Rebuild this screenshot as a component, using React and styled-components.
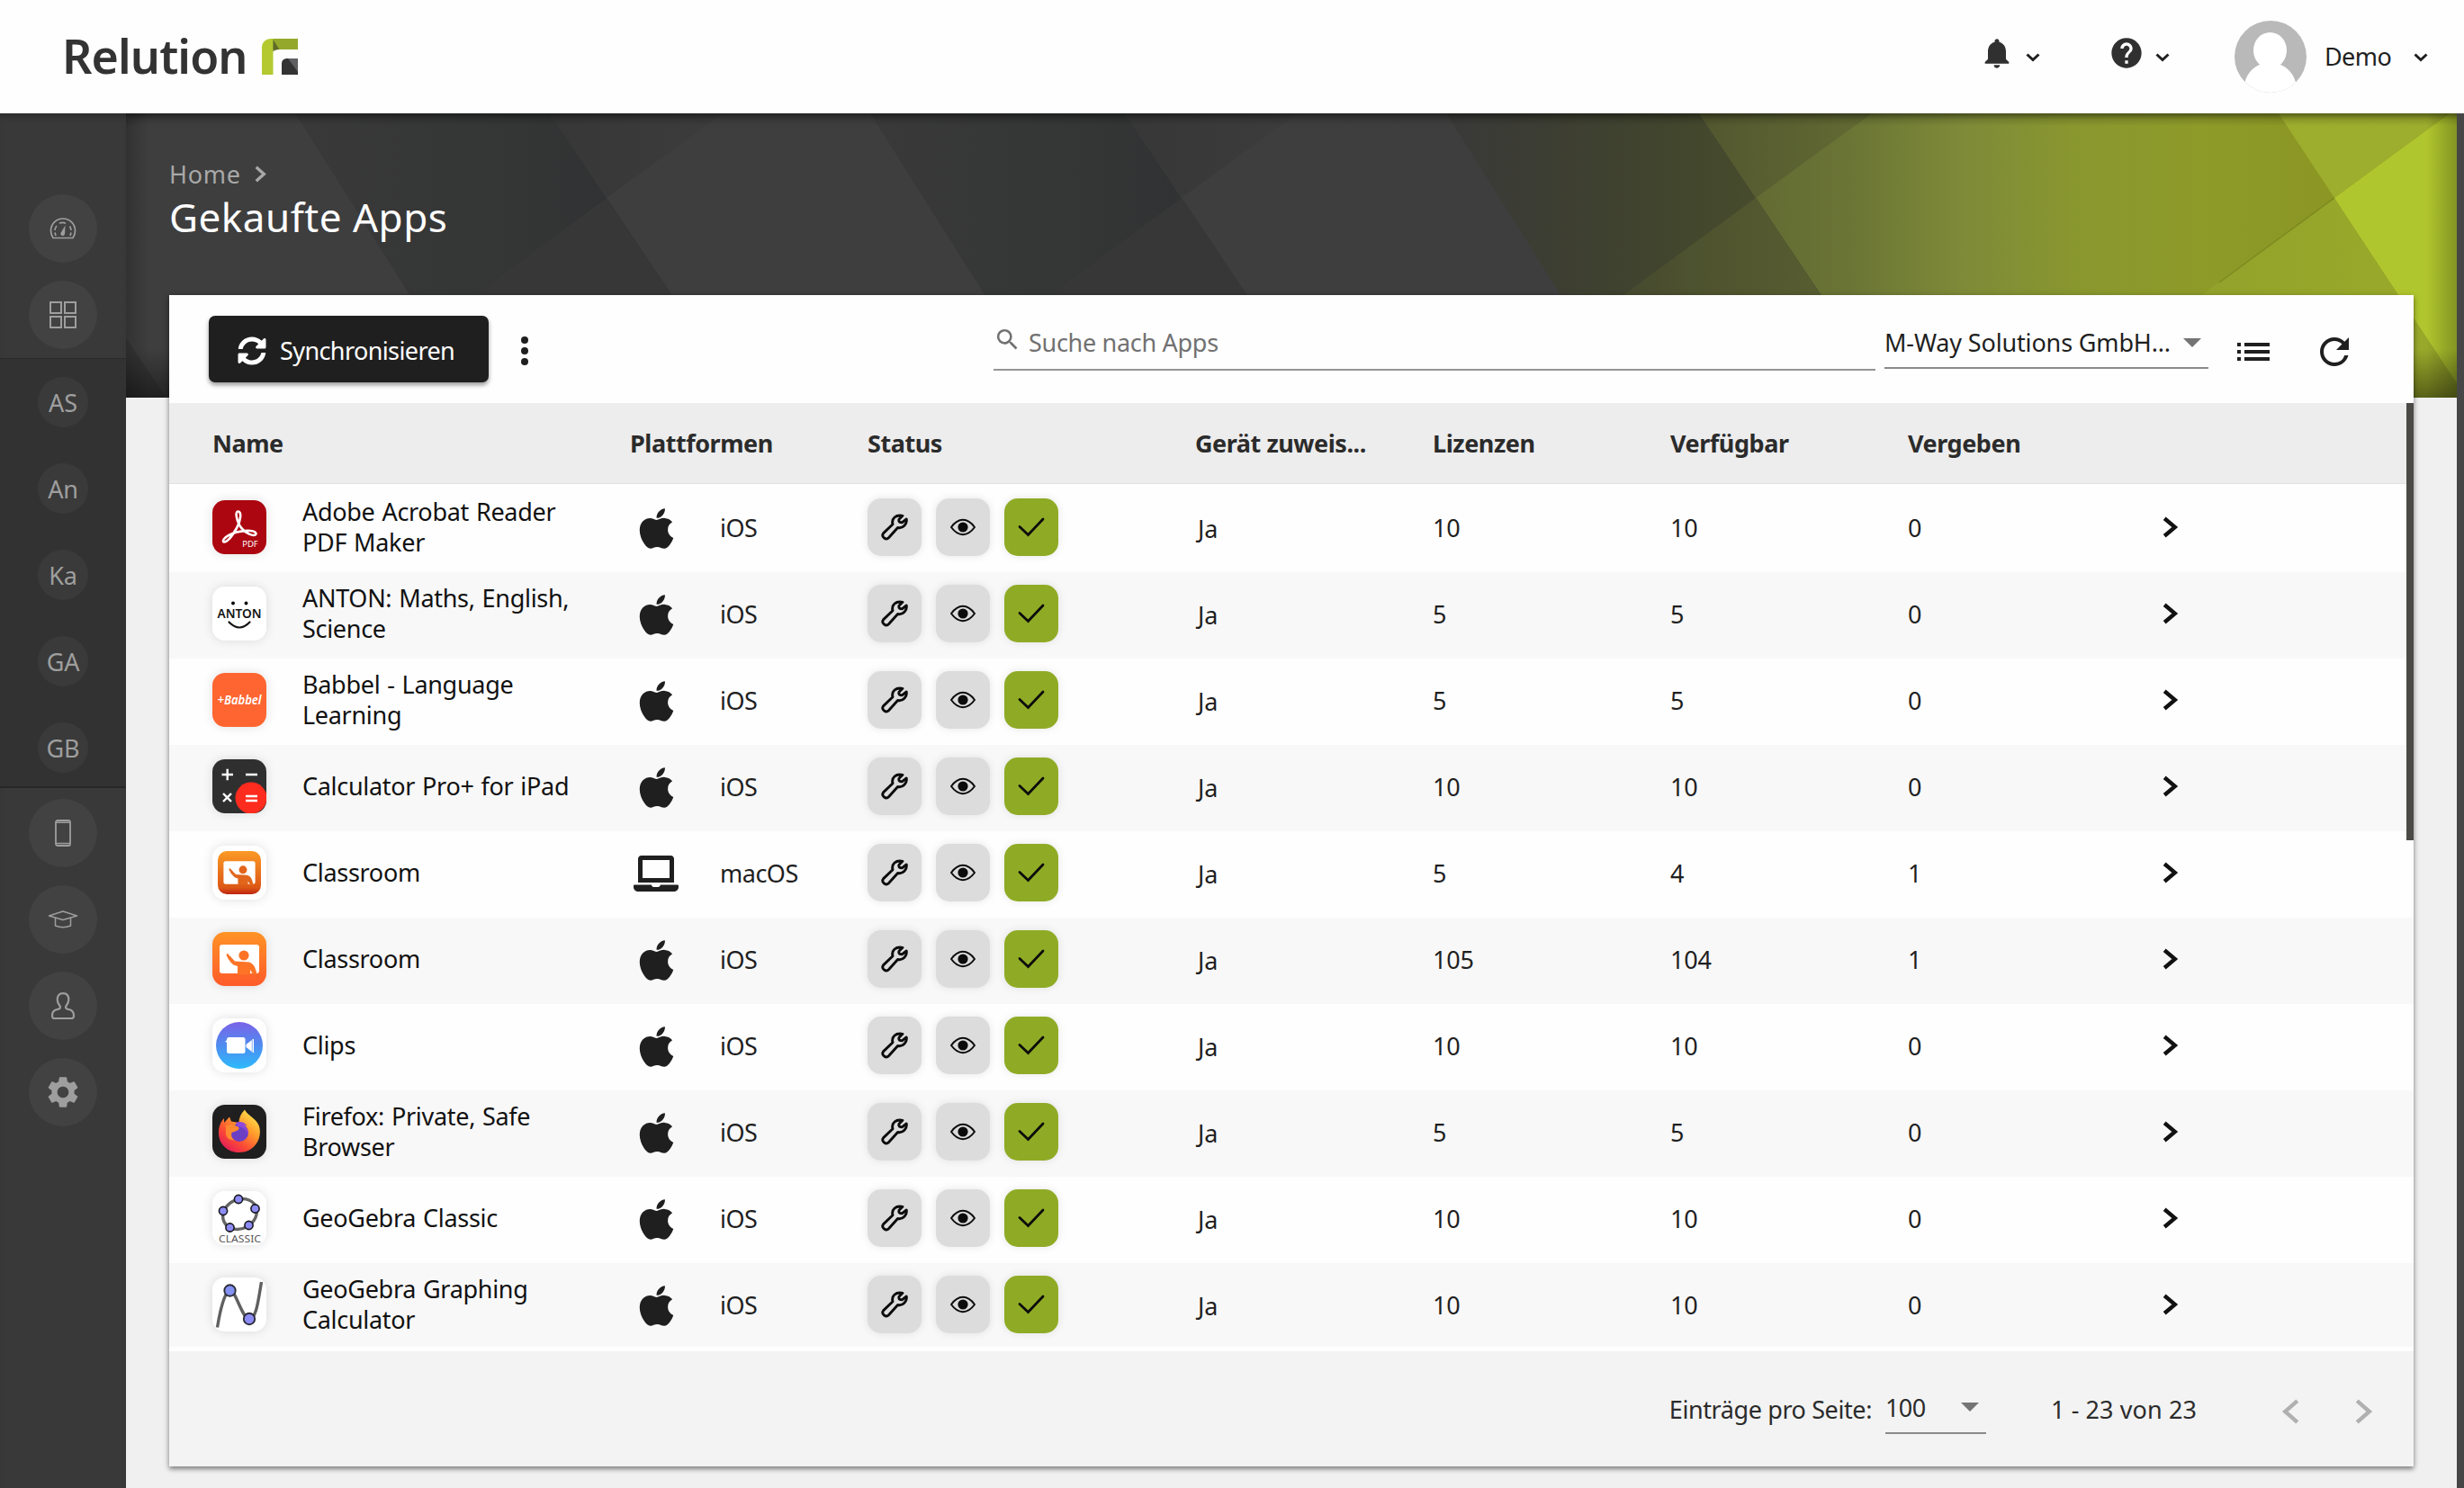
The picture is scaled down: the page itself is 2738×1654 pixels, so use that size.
import styled, { createGlobalStyle } from "styled-components";
import { FaApple, FaLaptop, FaSyncAlt } from "react-icons/fa";
import {
  MdHelp,
  MdList,
  MdNotifications,
  MdRefresh,
  MdSearch,
  MdSettings,
} from "react-icons/md";

const columns = [
  "Name",
  "Plattformen",
  "Status",
  "Gerät zuweis...",
  "Lizenzen",
  "Verfügbar",
  "Vergeben",
  "",
];

const apps = [
  { icon: AcrobatIcon, name: "Adobe Acrobat Reader PDF Maker", os: "iOS", total: 10, free: 10, used: 0 },
  { icon: AntonIcon, name: "ANTON: Maths, English, Science", os: "iOS", total: 5, free: 5, used: 0 },
  { icon: BabbelIcon, name: "Babbel - Language Learning", os: "iOS", total: 5, free: 5, used: 0 },
  { icon: CalculatorIcon, name: "Calculator Pro+ for iPad", os: "iOS", total: 10, free: 10, used: 0 },
  { icon: ClassroomMacIcon, name: "Classroom", os: "macOS", total: 5, free: 4, used: 1 },
  { icon: ClassroomIcon, name: "Classroom", os: "iOS", total: 105, free: 104, used: 1 },
  { icon: ClipsIcon, name: "Clips", os: "iOS", total: 10, free: 10, used: 0 },
  { icon: FirefoxIcon, name: "Firefox: Private, Safe Browser", os: "iOS", total: 5, free: 5, used: 0 },
  { icon: GeoClassicIcon, name: "GeoGebra Classic", os: "iOS", total: 10, free: 10, used: 0 },
  { icon: GeoGraphIcon, name: "GeoGebra Graphing Calculator", os: "iOS", total: 10, free: 10, used: 0 },
];

export default function App() {
  return (
    <Page>
      <GlobalStyle />
      <Header />
      <Main>
        <SideBar />
        <Content>
          <Hero>
            <HeroArt />
            <Crumb>
              Home
              <Chevron width={12} height={19} stroke={3.4} dir="right" />
            </Crumb>
            <Title>Gekaufte Apps</Title>
          </Hero>
          <Card>
            <Toolbar />
            <AppTable />
            <Pager />
          </Card>
        </Content>
        <PageScrollbar />
      </Main>
    </Page>
  );
}

function Header() {
  return (
    <HeaderBar>
      <Logo>
        <LogoText>Relution</LogoText>
        <LogoMark />
      </Logo>
      <HeaderGroup>
        <HeaderIcon>
          <MdNotifications />
        </HeaderIcon>
        <Chevron width={16} height={9} stroke={3} dir="down" />
      </HeaderGroup>
      <HeaderGroup $gap={76}>
        <HeaderIcon>
          <MdHelp />
        </HeaderIcon>
        <Chevron width={16} height={9} stroke={3} dir="down" />
      </HeaderGroup>
      <HeaderGroup $gap={72}>
        <Avatar />
        <UserName>Demo</UserName>
        <Chevron width={16} height={9} stroke={3} dir="down" />
      </HeaderGroup>
    </HeaderBar>
  );
}

function SideBar() {
  return (
    <Side>
      <SideGroup $first>
        <SideItem>
          <Bubble>
            <svg width="30" height="24" viewBox="0 0 30 24" fill="none" stroke="currentColor" strokeWidth="1.7">
              <path d="M4 22.500Q1.500 19 1.500 14.500A13.500 13.500 0 0 1 28.500 14.500Q28.500 19 26 22.500Z" strokeLinejoin="round" />
              <path d="M6 14a9 9 0 0 1 2-5M11 6.200a9 9 0 0 1 7 0M22.500 9.500a9 9 0 0 1 1.500 4.500M6 16.500l1 3.500M24 16.500l-1 3.500" />
              <path d="M17.500 8.500L17 18A2.300 2.300 0 1 1 12.800 16.500z" fill="currentColor" stroke="none" />
            </svg>
          </Bubble>
        </SideItem>
        <SideItem>
          <Bubble>
            <svg width="30" height="30" viewBox="0 0 30 30" fill="none" stroke="currentColor" strokeWidth="2">
              <rect x="1" y="1" width="12" height="12" />
              <rect x="17" y="1" width="12" height="12" />
              <rect x="1" y="17" width="12" height="12" />
              <rect x="17" y="17" width="12" height="12" />
            </svg>
          </Bubble>
        </SideItem>
      </SideGroup>
      <SideGroup $dark>
        {["AS", "An", "Ka", "GA", "GB"].map((label) => (
          <SideItem key={label}>
            <Bubble $small>{label}</Bubble>
          </SideItem>
        ))}
      </SideGroup>
      <SideGroup>
        <SideItem>
          <Bubble>
            <svg width="18" height="30" viewBox="0 0 18 30" fill="none" stroke="currentColor" strokeWidth="1.8">
              <rect x="1" y="1" width="16" height="28" rx="2" />
              <path d="M1 3.300h16M1 26.500h16" strokeWidth="1.400" />
            </svg>
          </Bubble>
        </SideItem>
        <SideItem>
          <Bubble>
            <svg width="34" height="20" viewBox="0 0 34 20" fill="none" stroke="currentColor" strokeWidth="1.500" strokeLinejoin="round">
              <path d="M17 1L32.500 6 17 10.500 1.500 6Z" />
              <path d="M8.500 8v9q8.500 3.400 17 0V8" />
            </svg>
          </Bubble>
        </SideItem>
        <SideItem>
          <Bubble>
            <svg width="26" height="30" viewBox="0 0 26 30" fill="none" stroke="currentColor" strokeWidth="2.200" strokeLinejoin="round">
              <path d="M13 1.200c4.500 0 6.300 3 6.300 7 0 3.500-2 6-3.300 7.800 0 2.300 1.300 2.600 4.300 3.300 4 1 4.700 3.200 4.700 6.700q0 3-2 3H3q-2 0-2-3c0-3.500.7-5.700 4.700-6.700 3-.7 4.300-1 4.300-3.300C8.700 14.200 6.700 11.700 6.700 8.200c0-4 1.800-7 6.300-7z" />
            </svg>
          </Bubble>
        </SideItem>
        <SideItem>
          <Bubble>
            <MdSettings size={42} />
          </Bubble>
        </SideItem>
      </SideGroup>
    </Side>
  );
}

function Toolbar() {
  return (
    <ToolbarRow>
      <SyncButton>
        <FaSyncAlt size={32} />
        Synchronisieren
      </SyncButton>
      <Dots>
        <svg width="8" height="32" viewBox="0 0 8 32" fill="#1f1f1f">
          <circle cx="4" cy="4" r="4" />
          <circle cx="4" cy="16" r="4" />
          <circle cx="4" cy="28" r="4" />
        </svg>
      </Dots>
      <SearchField>
        <MdSearch size={31} />
        Suche nach Apps
      </SearchField>
      <OrgSelect>
        M-Way Solutions GmbH...
        <Triangle />
      </OrgSelect>
      <ToolIcon $gap={26}>
        <MdList />
      </ToolIcon>
      <ToolIcon $gap={42}>
        <MdRefresh />
      </ToolIcon>
    </ToolbarRow>
  );
}

function AppTable() {
  return (
    <TableWrap>
      <TableHead>
        {columns.map((col) => (
          <span key={col}>{col}</span>
        ))}
      </TableHead>
      <TableBody>
        {apps.map((app, i) => (
          <Row key={i} $odd={i % 2 === 1}>
            <NameCell>
              <AppTile>
                <app.icon />
              </AppTile>
              <AppName>{app.name}</AppName>
            </NameCell>
            <PlatformCell>
              <PlatformIcon>
                {app.os === "iOS" ? (
                  <FaApple size={51} />
                ) : (
                  <FaLaptop size={50} />
                )}
              </PlatformIcon>
              {app.os}
            </PlatformCell>
            <StatusCell>
              <Badge>
                <svg width="30" height="30" viewBox="0 0 30 30" fill="none" stroke="#0c0c0c" strokeWidth="2.900" strokeLinejoin="round">
                  <path d="M24 2.300L20 6.300Q19 9.800 23.300 9.800L28.200 6C29.200 11.500 24.500 16.800 18.600 15.500L8.500 26.700C5.500 29.800-.3 25.500 2.700 21.600L13 11.700C11.300 5.500 16.500.6 24 2.300Z" />
                </svg>
              </Badge>
              <Badge>
                <svg width="30" height="20" viewBox="0 0 30 20" fill="none" stroke="#0c0c0c" strokeWidth="2">
                  <path d="M2 10Q8 1.800 15 1.800T28 10Q22 18.200 15 18.200T2 10Z" strokeLinejoin="round" />
                  <circle cx="15" cy="10" r="5.600" fill="#0c0c0c" stroke="none" />
                </svg>
              </Badge>
              <Badge $ok>
                <svg width="30" height="22" viewBox="0 0 30 22" fill="none" stroke="#0c0c0c" strokeWidth="2.800" strokeLinecap="round">
                  <path d="M2 10.500L11.500 19.500 28 2" />
                </svg>
              </Badge>
            </StatusCell>
            <YesCell>Ja</YesCell>
            <span>{app.total}</span>
            <span>{app.free}</span>
            <span>{app.used}</span>
            <ArrowCell>
              <Chevron width={16} height={24} stroke={4.4} dir="right" />
            </ArrowCell>
          </Row>
        ))}
      </TableBody>
      <TableScrollbar />
    </TableWrap>
  );
}

function Pager() {
  return (
    <PagerRow>
      <PagerLabel>Einträge pro Seite:</PagerLabel>
      <SizeSelect>
        100
        <Triangle />
      </SizeSelect>
      <PagerRange>1 - 23 von 23</PagerRange>
      <PagerArrows>
        <Chevron width={18} height={28} stroke={4.4} dir="left" />
        <Chevron width={18} height={28} stroke={4.4} dir="right" />
      </PagerArrows>
    </PagerRow>
  );
}

function Chevron({ width: w, height: h, stroke, dir }) {
  const s = stroke / 2;
  const points = {
    right: `${s},${s} ${w - s},${h / 2} ${s},${h - s}`,
    left: `${w - s},${s} ${s},${h / 2} ${w - s},${h - s}`,
    down: `${s},${s} ${w / 2},${h - s} ${w - s},${s}`,
  };
  return (
    <svg width={w} height={h} viewBox={`0 0 ${w} ${h}`} overflow="visible">
      <polyline points={points[dir]} fill="none" stroke="currentColor" strokeWidth={stroke} />
    </svg>
  );
}

function Triangle() {
  return (
    <svg width="20" height="10" viewBox="0 0 20 10" fill="#747474">
      <path d="M0 0h20L10 10z" />
    </svg>
  );
}

function LogoMark() {
  return (
    <svg width="40" height="40" viewBox="0 0 40 40">
      <path d="M12 0H40V12H12z" fill="#94a92b" />
      <path d="M12.500 0H9.500A9.500 9.500 0 0 0 0 9.500V40H12.500z" fill="#b3c92f" />
      <path d="M12.500 1L19.500 12Q14 12 12.500 14.500z" fill="#5f6b26" />
      <path d="M40 22H27.500A5.500 5.500 0 0 0 22 27.500V40H40z" fill="#333" />
      <path d="M40 22H29L40 37z" fill="#606062" />
    </svg>
  );
}

function Avatar() {
  return (
    <svg width="80" height="80" viewBox="0 0 80 80">
      <defs>
        <clipPath id="avatar">
          <circle cx="40" cy="40" r="40" />
        </clipPath>
      </defs>
      <g clipPath="url(#avatar)">
        <rect width="80" height="80" fill="#b9b9b9" />
        <ellipse cx="39.500" cy="33" rx="18.500" ry="20" fill="#fff" />
        <path d="M30 46V48C19 52 13 60 10.500 72V80H69V72C66.500 60 60 52 49 48V46z" fill="#fff" />
      </g>
    </svg>
  );
}

// Triangles repeat every 639px, the last tiles fade into green
function HeroArt() {
  const tiles = [-168, 471, 1110];
  return (
    <Backdrop viewBox="0 0 2590 316" preserveAspectRatio="none">
      <defs>
        <linearGradient id="band">
          <stop offset="0" stopColor="#393939" />
          <stop offset="0.5" stopColor="#343535" />
          <stop offset="1" stopColor="#2c2e30" />
        </linearGradient>
        <linearGradient id="wedge">
          <stop offset="0" stopColor="#373737" />
          <stop offset="1" stopColor="#3c3c3c" />
        </linearGradient>
        <linearGradient id="wedge3">
          <stop offset="0" stopColor="#52572f" />
          <stop offset="1" stopColor="#636b33" />
        </linearGradient>
        <linearGradient id="band3" gradientUnits="userSpaceOnUse" x1="1467" x2="1860" y1="0" y2="0">
          <stop offset="0" stopColor="#393939" />
          <stop offset="0.3" stopColor="#3d3e32" />
          <stop offset="0.65" stopColor="#42462d" />
          <stop offset="1" stopColor="#4a4f2d" />
        </linearGradient>
        <linearGradient id="low3" gradientUnits="userSpaceOnUse" x1="1580" x2="1940" y1="0" y2="0">
          <stop offset="0" stopColor="#3f412f" />
          <stop offset="0.5" stopColor="#4f542f" />
          <stop offset="1" stopColor="#5b6131" />
        </linearGradient>
        <linearGradient id="olive" gradientUnits="userSpaceOnUse" x1="1740" x2="2450" y1="0" y2="0">
          <stop offset="0" stopColor="#5d6432" />
          <stop offset="0.25" stopColor="#6b7535" />
          <stop offset="0.42" stopColor="#7e8a38" />
          <stop offset="0.6" stopColor="#89972f" />
          <stop offset="0.8" stopColor="#8e9b29" />
          <stop offset="1" stopColor="#8b9623" />
        </linearGradient>
        <linearGradient id="low4" gradientUnits="userSpaceOnUse" x1="2190" x2="2500" y1="0" y2="0">
          <stop offset="0" stopColor="#8f9e2c" />
          <stop offset="1" stopColor="#98a82a" />
        </linearGradient>
        <linearGradient id="top" x1="0" x2="0" y1="0" y2="1">
          <stop offset="0" stopColor="#000" stopOpacity="0.45" />
          <stop offset="0.5" stopColor="#000" stopOpacity="0.12" />
          <stop offset="1" stopColor="#000" stopOpacity="0" />
        </linearGradient>
        <linearGradient id="bottom" x1="0" x2="0" y1="0" y2="1">
          <stop offset="0" stopColor="#000" stopOpacity="0" />
          <stop offset="1" stopColor="#000" stopOpacity="0.42" />
        </linearGradient>
        <linearGradient id="left">
          <stop offset="0" stopColor="#000" stopOpacity="0.2" />
          <stop offset="1" stopColor="#000" stopOpacity="0" />
        </linearGradient>
        <linearGradient id="right">
          <stop offset="0" stopColor="#000" stopOpacity="0" />
          <stop offset="1" stopColor="#000" stopOpacity="0.25" />
        </linearGradient>
      </defs>
      <rect width="2590" height="316" fill="#3e3e3e" />
      {tiles.map((x) => (
        <g key={x} transform={`translate(${x} 0)`}>
          <path d="M-283 0H0L212 316H-84z" fill="url(#band)" />
          <path d="M63 94L212 316H-84L-133 238z" fill="#373737" />
          <path d="M0 0H192L63 94z" fill="url(#wedge)" />
        </g>
      ))}
      <path d="M1748 0H2590V316H1960z" fill="url(#olive)" />
      <path d="M1467 0H1748L1960 316H1666z" fill="url(#band3)" />
      <path d="M1811 94L1960 316H1508L1615 238z" fill="url(#low3)" />
      <path d="M1748 0H1940L1811 94z" fill="url(#wedge3)" />
      <path d="M2454 94L2605 316H2150z" fill="url(#low4)" />
      <path d="M2392 0H2582L2454 94z" fill="#9dad2d" />
      <path d="M2454 94L2582 0H2590V300z" fill="#b0c62e" />
      <path d="M2454 94L2326 188" stroke="#6f7c1c" strokeWidth="1.500" opacity="0.6" />
      <rect width="2590" height="14" fill="url(#top)" />
      <rect y="262" width="2590" height="54" fill="url(#bottom)" />
      <rect width="26" height="316" fill="url(#left)" />
      <rect x="2556" width="34" height="316" fill="url(#right)" />
    </Backdrop>
  );
}

function AcrobatIcon() {
  return (
    <svg viewBox="0 0 60 60">
      <rect width="60" height="60" fill="#ac0610" />
      <path
        d="M28.500 12.500C32.500 12.500 32 22 27 31 22.500 39 16.500 46.500 13 46.500 9.500 45.500 15 38.500 27 35.500 38 32.800 49 33.500 48.500 37.500 47 41.500 36 37 30.500 28.500 26 21 25.500 12.500 28.500 12.500Z"
        fill="none"
        stroke="#fff"
        strokeWidth="2.600"
      />
      <IconText x="42" y="51.500" fontSize="9.500" fill="#fff">PDF</IconText>
    </svg>
  );
}

function AntonIcon() {
  return (
    <svg viewBox="0 0 60 60">
      <rect width="60" height="60" fill="#fff" />
      <circle cx="23" cy="18.500" r="1.900" />
      <circle cx="37.500" cy="18.500" r="1.900" />
      <IconText x="30" y="35" fontSize="15" textLength="49" $bold fill="#141414">ANTON</IconText>
      <path d="M18.500 39.500q11.500 12 23 0" fill="none" stroke="#141414" strokeWidth="2.200" strokeLinecap="round" />
    </svg>
  );
}

function BabbelIcon() {
  return (
    <svg viewBox="0 0 60 60">
      <rect width="60" height="60" fill="#fe6530" />
      <IconText x="30" y="34.500" fontSize="13.500" textLength="49" $bold $italic fill="#fff">+Babbel</IconText>
    </svg>
  );
}

function CalculatorIcon() {
  return (
    <svg viewBox="0 0 60 60" stroke="#fff" strokeWidth="2.400">
      <rect width="60" height="60" fill="#2f2f2f" stroke="none" />
      <circle cx="43" cy="43" r="17.500" fill="#fe2c1e" stroke="none" />
      <path d="M10.500 17h12.500M16.700 10.700v12.500M37 17h13M12 38l9 9M21 38l-9 9M37 41h13M37 46h13" />
    </svg>
  );
}

function Teacher({ color }) {
  return (
    <>
      <rect x="8" y="14" width="44" height="32" rx="3" fill="#fff" />
      <circle cx="35" cy="26" r="5.600" fill={color} />
      <path d="M15.500 25.500Q16.500 23 18 25L25 32.500 41 33.500Q46.500 35 48.500 43L49.500 47H45L42 42V47H28V38L23.500 36.500Q18 32 15.500 25.500z" fill={color} />
    </>
  );
}

function ClassroomMacIcon() {
  return (
    <svg viewBox="0 0 60 60">
      <defs>
        <linearGradient id="classMac" x1="0" x2="0" y1="0" y2="1">
          <stop offset="0" stopColor="#fb9a26" />
          <stop offset="0.85" stopColor="#dc5715" />
          <stop offset="1" stopColor="#bd2410" />
        </linearGradient>
      </defs>
      <rect width="60" height="60" fill="#fff" />
      <rect x="6" y="6" width="48" height="48" rx="10" fill="url(#classMac)" />
      <g transform="translate(6 6) scale(0.8)">
        <Teacher color="#e2651c" />
      </g>
    </svg>
  );
}

function ClassroomIcon() {
  return (
    <svg viewBox="0 0 60 60">
      <defs>
        <linearGradient id="classIos" x1="0" x2="0" y1="0" y2="1">
          <stop offset="0" stopColor="#ff9326" />
          <stop offset="1" stopColor="#fe5a2a" />
        </linearGradient>
      </defs>
      <rect width="60" height="60" fill="url(#classIos)" />
      <Teacher color="#fd7427" />
    </svg>
  );
}

function ClipsIcon() {
  return (
    <svg viewBox="0 0 60 60">
      <defs>
        <linearGradient id="clips" x1="0" x2="0" y1="0" y2="1">
          <stop offset="0" stopColor="#7a62e6" />
          <stop offset="0.5" stopColor="#4f8cf0" />
          <stop offset="1" stopColor="#2cbafb" />
        </linearGradient>
      </defs>
      <rect width="60" height="60" fill="#fff" />
      <circle cx="30" cy="30" r="26" fill="url(#clips)" />
      <rect x="16" y="21" width="20.500" height="18" rx="2.500" fill="#fff" />
      <path d="M14 26l3-3v4zM37.500 29v3l6.300 5V24zM44.500 23h1.500v15h-1.500z" fill="#fff" />
    </svg>
  );
}

function FirefoxIcon() {
  return (
    <svg viewBox="0 0 60 60">
      <defs>
        <linearGradient id="fox" x1="0.85" x2="0.2" y1="0.1" y2="0.95">
          <stop offset="0" stopColor="#ffe04a" />
          <stop offset="0.35" stopColor="#ff9a2c" />
          <stop offset="0.7" stopColor="#fb4a35" />
          <stop offset="1" stopColor="#e51e58" />
        </linearGradient>
      </defs>
      <rect width="60" height="60" fill="#1f1f20" />
      <path d="M36 5.500C38 11 49 15 52 24 56 38 46 53 30 53 15 53 6 42 7 29 7.300 23.500 10 18 13 15V20L19 13.500 21 18.500Q27 20 29.500 19.500 29.500 12 36 5.500z" fill="url(#fox)" />
      <circle cx="30" cy="31" r="10" fill="#6b3fc4" />
      <path d="M26 20Q34 17 38.500 23.500L33 22Q40 26 40 33 36 24 28 24z" fill="#8f49dc" />
      <path d="M15 23Q22 21 28.500 24.500 31 26 28 28.500L21.500 31Q20 37 25 39.500 17 40 15 33z" fill="#ff8a2f" />
    </svg>
  );
}

function GeoClassicIcon() {
  const dots = [[29, 9], [47.500, 19.500], [40.500, 38], [19.500, 40.500], [12, 22]];
  return (
    <svg viewBox="0 0 60 60">
      <rect width="60" height="60" fill="#fff" />
      <ellipse cx="30.500" cy="25.500" rx="19.500" ry="16.200" fill="none" stroke="#656565" strokeWidth="3.400" transform="rotate(-28 30.500 25.500)" />
      {dots.map(([x, y]) => (
        <circle key={x} cx={x} cy={y} r="4.600" fill="#8d8cf5" stroke="#17171f" strokeWidth="1.600" />
      ))}
      <IconText x="30.500" y="57" fontSize="11" textLength="47" fill="#555">CLASSIC</IconText>
    </svg>
  );
}

function GeoGraphIcon() {
  return (
    <svg viewBox="0 0 60 60">
      <rect width="60" height="60" fill="#fff" />
      <path d="M5.500 55.500C9 34 14 14.500 20 14.500S33 46 41 46 51 25 54.500 5" fill="none" stroke="#606060" strokeWidth="3.400" />
      <circle cx="19.500" cy="14.500" r="6.200" fill="#8391f2" stroke="#2c2c38" strokeWidth="1.900" />
      <circle cx="41" cy="46" r="6.200" fill="#8d8cf5" stroke="#2c2c38" strokeWidth="1.900" />
    </svg>
  );
}

const GlobalStyle = createGlobalStyle`
  * {
    box-sizing: border-box;
  }

  body {
    margin: 0;
    background: #f0f0f0;
    color: #1f1f1f;
    font-family: "Noto Sans", "Open Sans", sans-serif;
    font-size: 27px;
    letter-spacing: -0.15px;
  }

  svg {
    flex-shrink: 0;
  }
`;

const Page = styled.div`
  display: flex;
  flex-direction: column;
  width: 2738px;
  height: 1654px;
  overflow: hidden;
`;

const HeaderBar = styled.header`
  display: flex;
  align-items: center;
  height: 126px;
  padding: 0 40px 0 69px;
  background: #fefefe;
`;

const Logo = styled.div`
  display: flex;
  align-items: center;
  margin-right: auto;
`;

const LogoText = styled.span`
  width: 222px;
  margin-top: -3px;
  font-size: 52px;
  font-weight: 600;
  line-height: 60px;
  letter-spacing: -0.9px;
  color: #333;
`;

const HeaderGroup = styled.div`
  display: flex;
  align-items: center;
  gap: 12px;
  margin-left: ${(props) => props.$gap || 0}px;
`;

const HeaderIcon = styled.span`
  display: flex;
  margin-bottom: 9px;
  font-size: 40px;
  color: #303030;
`;

const UserName = styled.span`
  width: 87px;
  margin: -2px 0 0 8px;
  letter-spacing: -0.6px;
`;

const Main = styled.div`
  display: flex;
  flex: 1;
  min-height: 0;
`;

const Side = styled.nav`
  width: 140px;
  background: #393939;
  box-shadow: inset 0 8px 8px -6px rgba(0, 0, 0, 0.35);
`;

const SideGroup = styled.div`
  padding-top: ${(props) => (props.$first ? 80 : 0)}px;
  background: ${(props) => (props.$dark ? "#323232" : "none")};
  border-top: ${(props) => (props.$dark ? "1px solid #2a2a2a" : "none")};
  border-bottom: ${(props) => (props.$dark ? "2px solid #272727" : "none")};
  height: ${(props) => (props.$dark ? "478px" : "auto")};
  margin-bottom: ${(props) => (props.$dark ? 2 : 0)}px;
`;

const SideItem = styled.div`
  display: flex;
  align-items: center;
  justify-content: center;
  height: 96px;
`;

const Bubble = styled.div`
  display: flex;
  align-items: center;
  justify-content: center;
  width: ${(props) => (props.$small ? 56 : 76)}px;
  height: ${(props) => (props.$small ? 56 : 76)}px;
  border-radius: 50%;
  background: ${(props) => (props.$small ? "#3a3a3a" : "#424242")};
  color: #9e9e9e;
`;

const Content = styled.main`
  display: flex;
  flex-direction: column;
  flex: 1;
`;

const PageScrollbar = styled.div`
  width: 8px;
  background: #464646;
`;

const Hero = styled.section`
  position: relative;
  flex-shrink: 0;
  height: 316px;
  padding: 49px 48px 0;
`;

const Backdrop = styled.svg`
  position: absolute;
  inset: 0;
  z-index: -1;
  width: 100%;
  height: 100%;
`;

const Crumb = styled.div`
  display: flex;
  align-items: center;
  gap: 15px;
  height: 37px;
  margin-bottom: 3px;
  letter-spacing: 0.7px;
  color: #a8a8a8;
`;

const Title = styled.h1`
  margin: 0;
  font-size: 44px;
  font-weight: 400;
  line-height: 52px;
  letter-spacing: 0.5px;
  color: #fff;
`;

const Card = styled.section`
  position: relative;
  width: 2494px;
  height: 1302px;
  margin: -114px 48px 0;
  background: #fefefe;
  box-shadow: 0 3px 5px rgba(0, 0, 0, 0.4), 0 1px 8px rgba(0, 0, 0, 0.15);
`;

const ToolbarRow = styled.div`
  display: flex;
  align-items: center;
  height: 120px;
  padding: 0 64px 0 44px;
`;

const SyncButton = styled.button`
  display: flex;
  align-items: center;
  gap: 15px;
  width: 311px;
  height: 74px;
  padding: 3px 0 0 32px;
  border: none;
  border-radius: 7px;
  background: #1f1f1f;
  box-shadow: 0 3px 5px rgba(0, 0, 0, 0.4);
  color: #fff;
  font: inherit;
  letter-spacing: -0.6px;
`;

const Dots = styled.div`
  display: flex;
  margin: 4px 0 0 36px;
`;

const SearchField = styled.div`
  display: flex;
  align-items: center;
  width: 980px;
  height: 48px;
  margin-left: auto;
  padding-bottom: 13px;
  border-bottom: 2px solid #959595;
  color: #717171;
  letter-spacing: -0.3px;

  svg {
    margin: -6px 8px 0 0;
  }
`;

const OrgSelect = styled.div`
  display: flex;
  align-items: center;
  justify-content: space-between;
  width: 360px;
  height: 48px;
  margin: -4px 0 0 10px;
  padding: 0 8px 9px 0;
  border-bottom: 2px solid #8a8a8a;
`;

const ToolIcon = styled.span`
  display: flex;
  margin: 6px 0 0 ${(props) => props.$gap}px;
  font-size: 48px;
`;

const TableWrap = styled.div`
  position: relative;
`;

const TableHead = styled.div`
  display: grid;
  grid-template-columns: 464px 264px 364px repeat(5, 264px);
  align-items: center;
  height: 90px;
  padding-left: 48px;
  overflow: hidden;
  border-bottom: 1px solid #e2e2e2;
  background: #ededed;
  color: #2b2b2b;
  font-weight: 700;
  letter-spacing: -0.45px;
`;

const TableBody = styled.div`
  height: 964px;
  padding-top: 2px;
  overflow: hidden;
`;

const Row = styled.div`
  display: grid;
  grid-template-columns: 464px 264px 364px repeat(4, 264px) 100px;
  align-items: center;
  height: 96px;
  padding: 0 0 4px 48px;
  background: ${(props) => (props.$odd ? "#f8f8f8" : "#fefefe")};

  &:last-child {
    height: 93px;
    padding-bottom: 1px;
  }
`;

const NameCell = styled.div`
  display: flex;
  align-items: center;
`;

const AppTile = styled.div`
  display: flex;
  width: 60px;
  height: 60px;
  margin-right: 40px;
  overflow: hidden;
  border-radius: 14px;
  box-shadow: 0 0 12px rgba(0, 0, 0, 0.12);

  svg {
    width: 60px;
    height: 60px;
  }
`;

const AppName = styled.span`
  width: 305px;
  line-height: 34px;
  letter-spacing: -0.3px;
  word-spacing: 1.2px;
  color: #111;
`;

const PlatformCell = styled.div`
  display: flex;
  align-items: center;
  letter-spacing: -0.5px;
`;

const PlatformIcon = styled.span`
  display: flex;
  justify-content: center;
  width: 60px;
  margin: 2px 41px 0 -1px;
`;

const StatusCell = styled.div`
  display: flex;
  gap: 16px;
`;

const Badge = styled.span`
  display: flex;
  align-items: center;
  justify-content: center;
  width: 60px;
  height: 64px;
  border-radius: 15px;
  background: ${(props) => (props.$ok ? "#8fab25" : "#dcdcdc")};
  box-shadow: 0 0 10px rgba(0, 0, 0, 0.1);
`;

const YesCell = styled.span`
  padding: 2px 0 0 3px;
`;

const ArrowCell = styled.span`
  display: flex;
  padding-left: 19px;
  color: #111;
`;

const TableScrollbar = styled.div`
  position: absolute;
  top: 0;
  right: 0;
  width: 8px;
  height: 486px;
  background: #4b4a47;
`;

const PagerRow = styled.footer`
  display: flex;
  align-items: center;
  justify-content: flex-end;
  height: 128px;
  padding-right: 47px;
  background: #f3f3f3;
  color: #2b2b2b;
`;

const PagerLabel = styled.span`
  letter-spacing: -0.4px;
`;

const SizeSelect = styled.div`
  display: flex;
  align-items: center;
  justify-content: space-between;
  width: 112px;
  height: 58px;
  margin: -2px 72px 0 15px;
  padding-right: 8px;
  border-bottom: 2px solid #8a8a8a;
  letter-spacing: -0.6px;
`;

const PagerRange = styled.span`
  width: 167px;
  letter-spacing: 0.1px;
`;

const PagerArrows = styled.div`
  display: flex;
  gap: 62px;
  margin: 6px 0 0 91px;
  color: #b0b0b0;
`;

const IconText = styled.text.attrs({ textAnchor: "middle", lengthAdjust: "spacingAndGlyphs" })`
  font-weight: ${(props) => (props.$bold ? 600 : 400)};
  font-style: ${(props) => (props.$italic ? "italic" : "normal")};
  letter-spacing: 0;
`;
